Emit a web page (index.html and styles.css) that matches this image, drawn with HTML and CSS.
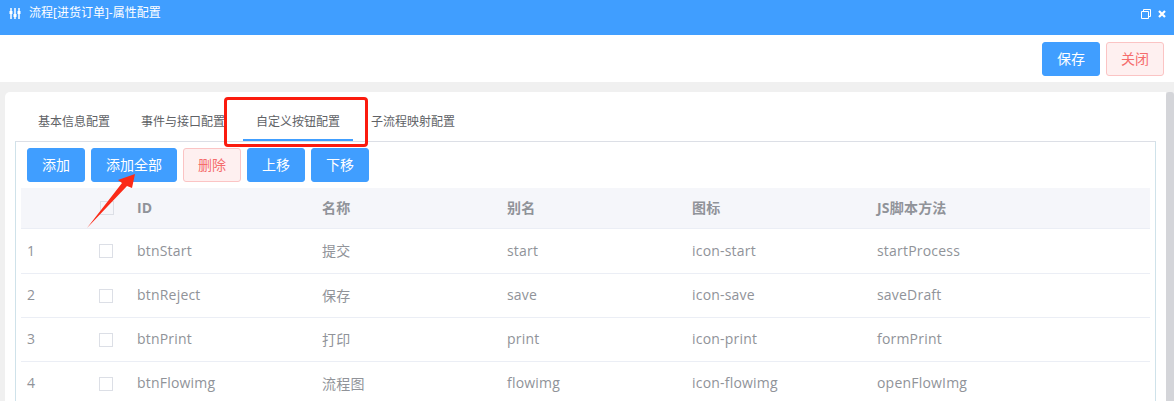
FILE: index.html
```html
<!DOCTYPE html>
<html lang="zh">
<head>
<meta charset="utf-8">
<title>属性配置</title>
<link rel="stylesheet" href="styles.css">
</head>
<body>
<header class="titlebar">
  <div class="title">
    <svg class="title-icon" width="12" height="11" viewBox="0 0 12 11"><path d="M2 0v3M6 0v6M10 0v3M2 6v5M6 9v2M10 6v5" stroke="#fff" stroke-width="1.500" fill="none"/><path d="M.5 3h3v3h-3zM4.500 6h3v3h-3zM8.500 3h3v3h-3z" fill="#fff"/></svg>
    <span>流程[进货订单]-属性配置</span>
  </div>
  <div class="win-btns">
    <svg width="10" height="10" viewBox="0 0 10 10"><path d="M.5 2.500h7v7h-7zM2.500 2.500v-2h7v7h-2" stroke="#fff" fill="none"/></svg>
    <svg width="8" height="8" viewBox="0 0 8 8"><path d="M1 1l6 6M7 1L1 7" stroke="#fff" stroke-width="2.200" fill="none"/></svg>
  </div>
</header>
<div class="toolbar">
  <button class="btn primary">保存</button>
  <button class="btn danger">关闭</button>
</div>
<main class="content">
  <section class="card">
    <nav class="tabs">
      <a class="tab">基本信息配置</a>
      <a class="tab">事件与接口配置</a>
      <a class="tab active">自定义按钮配置</a>
      <a class="tab">子流程映射配置</a>
    </nav>
    <div class="panel">
      <div class="actions">
        <button class="btn primary">添加</button>
        <button class="btn primary">添加全部</button>
        <button class="btn danger">删除</button>
        <button class="btn primary">上移</button>
        <button class="btn primary">下移</button>
      </div>
      <div class="table">
        <div class="row head">
          <span></span><span><i class="check"></i></span><span>ID</span><span>名称</span><span>别名</span><span>图标</span><span>JS脚本方法</span>
        </div>
        <div class="row">
          <span>1</span><span><i class="check"></i></span><span>btnStart</span><span>提交</span><span>start</span><span>icon-start</span><span>startProcess</span>
        </div>
        <div class="row">
          <span>2</span><span><i class="check"></i></span><span>btnReject</span><span>保存</span><span>save</span><span>icon-save</span><span>saveDraft</span>
        </div>
        <div class="row">
          <span>3</span><span><i class="check"></i></span><span>btnPrint</span><span>打印</span><span>print</span><span>icon-print</span><span>formPrint</span>
        </div>
        <div class="row">
          <span>4</span><span><i class="check"></i></span><span>btnFlowimg</span><span>流程图</span><span>flowimg</span><span>icon-flowimg</span><span>openFlowImg</span>
        </div>
      </div>
    </div>
  </section>
  <div class="scrollbar"></div>
</main>
<div class="mark-box"></div>
<svg class="mark-arrow" width="60" height="64" viewBox="0 0 60 64"><polygon points="2,63 37,18 33,15 50,9 47,23 42,21" fill="#fb2a17"/></svg>
</body>
</html>
```
FILE: styles.css
```css
* { box-sizing: border-box; }
html, body { margin: 0; height: 401px; overflow: hidden; }
body {
  position: relative;
  font-family: "Open Sans", "Noto Sans CJK SC", sans-serif;
  background: #f0f0f0;
  color: #909399;
}
.titlebar {
  height: 35px;
  background: #409eff;
  color: #fff;
  display: flex;
  justify-content: space-between;
  align-items: flex-start;
  padding: 6px 8px 0 9px;
  font-size: 12px;
}
.title { display: flex; align-items: center; gap: 8px; height: 14px; line-height: 14px; }
.win-btns { display: flex; align-items: center; gap: 7px; height: 14px; padding-top: 2px; }
.toolbar {
  height: 47px;
  background: #fff;
  display: flex;
  justify-content: flex-end;
  align-items: flex-start;
  gap: 6px;
  padding: 7px 10px 0 0;
}
.btn {
  height: 34px;
  padding: 0 14px 2px;
  border: 1px solid;
  border-radius: 3px;
  font: 14px "Open Sans", "Noto Sans CJK SC", sans-serif;
  white-space: nowrap;
}
.primary { background: #409eff; border-color: #409eff; color: #fff; }
.danger { background: #fef0f0; border-color: #fbc4c4; color: #f56c6c; }
.content { display: flex; height: 319px; padding: 10px 0 0 5px; }
.card {
  flex: 1;
  min-width: 0;
  background: #fff;
  border-radius: 5px 0 0 0;
  padding: 0 10px;
}
.scrollbar { width: 8px; background: #d4d5d9; border-radius: 3px 3px 0 0; }
.tabs { display: flex; gap: 5px; height: 49px; padding-left: 10px; }
.tab {
  padding: 0 13px;
  height: 49px;
  line-height: 59px;
  font-size: 12px;
  color: #606266;
}
.tab.active { border-bottom: 2px solid #409eff; }
.panel {
  height: 270px;
  border: 1px solid #dcdfe6;
  border-left-color: #cfe2ea;
  border-right-color: #cfe2ea;
  padding: 6px 5px 0;
  overflow: hidden;
}
.actions { display: flex; gap: 6px; padding-left: 6px; margin-bottom: 6px; }
.row {
  display: grid;
  grid-template-columns: 72px 38px 185px 185px 185px 185px 1fr;
  height: 44px;
  align-items: center;
  padding: 0 0 2px 6px;
  font-size: 14px;
  letter-spacing: .2px;
  color: #909399;
  border-bottom: 1px solid #ebeef5;
}
.row:nth-child(2) { height: 45px; }
.head {
  height: 41px;
  background: #f5f6fa;
  font-weight: 700;
}
.check {
  display: block;
  width: 14px;
  height: 14px;
  margin-top: 2px;
  border: 1px solid #dcdfe6;
  background: #fff;
}
.head .check { margin-left: 1px; background: transparent; }
.mark-box {
  position: absolute;
  left: 224px;
  top: 97px;
  width: 144px;
  height: 50px;
  border: 3px solid #fb1b0e;
  border-radius: 4px;
}
.mark-arrow { position: absolute; left: 85px; top: 165px; }
```
